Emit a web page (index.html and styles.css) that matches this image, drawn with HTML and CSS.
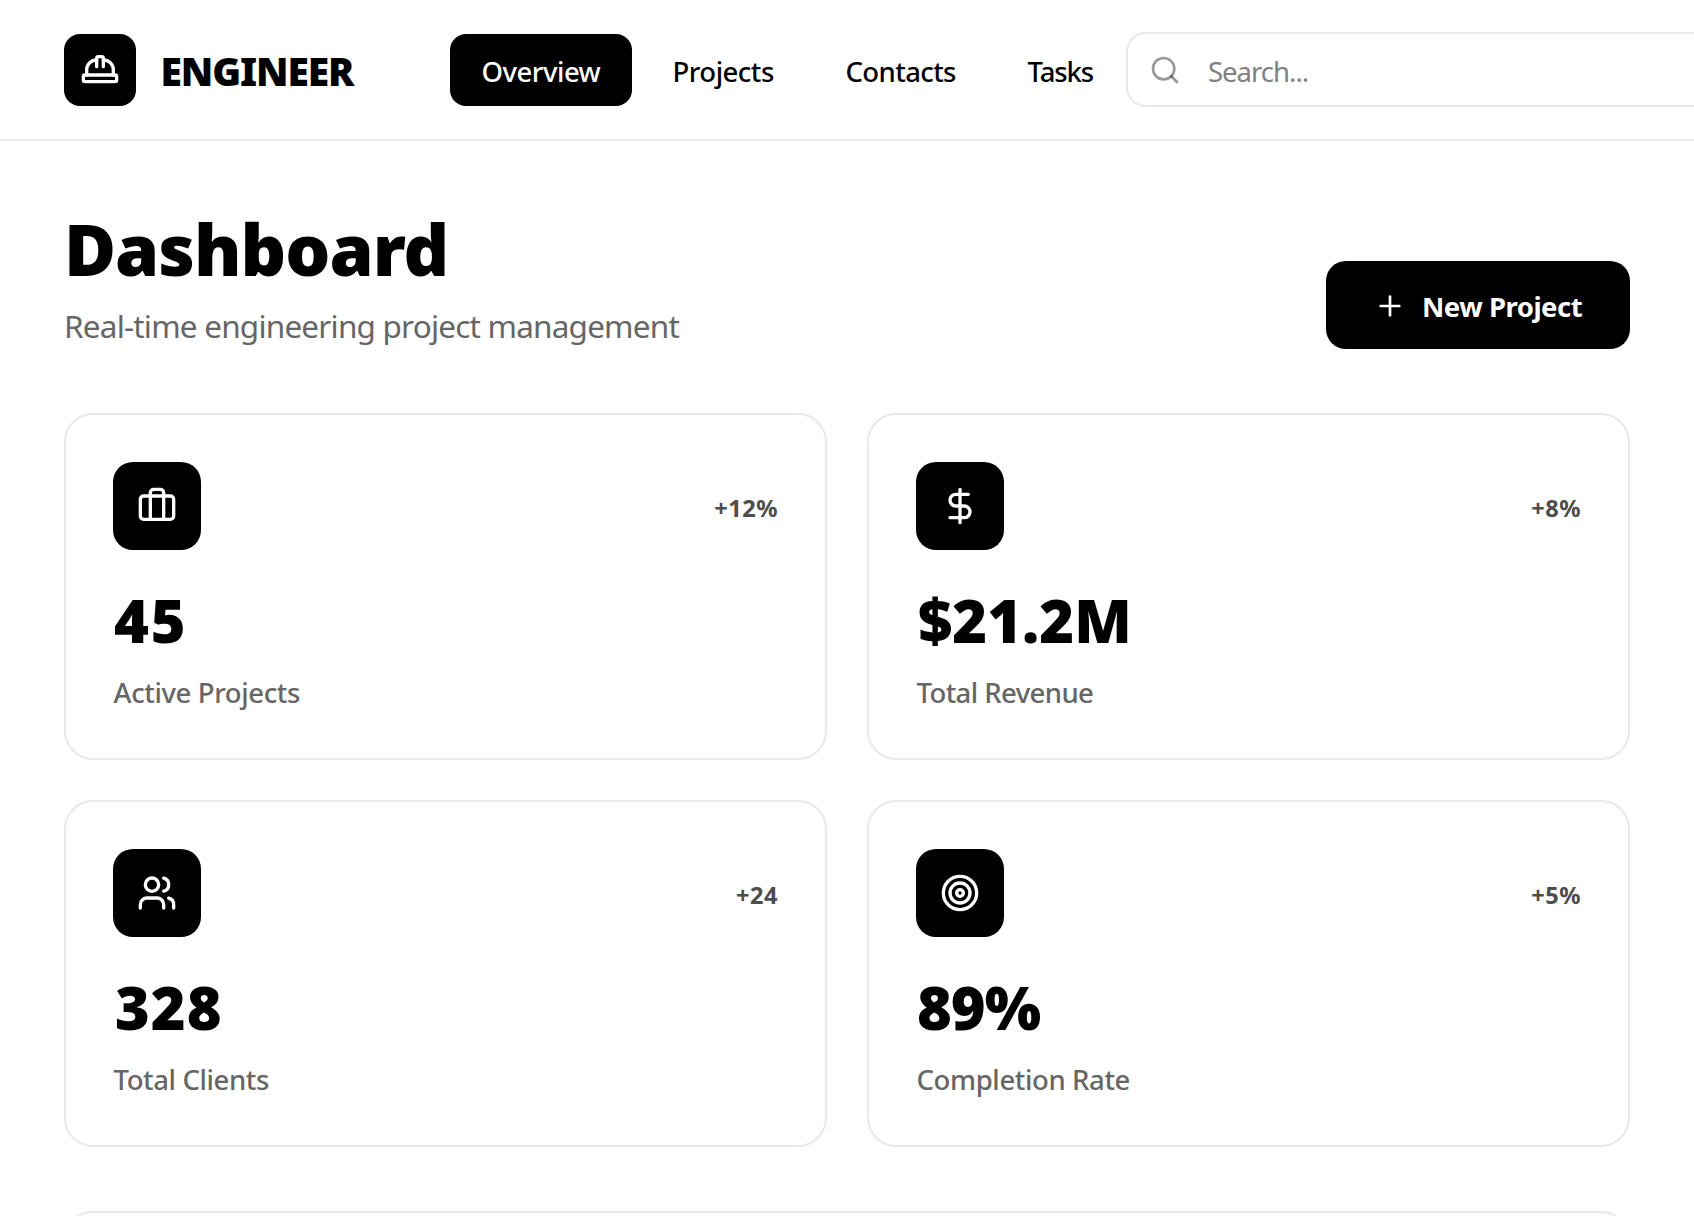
FILE: index.html
```html
<!DOCTYPE html>
<html lang="en">
<head>
<meta charset="utf-8">
<title>Engineer – Dashboard</title>
<link rel="stylesheet" href="styles.css">
</head>
<body>
<header class="topbar">
  <div class="brand">
    <span class="brand-mark">
      <svg class="icon icon-lg" viewBox="0 0 24 24"><path d="M2 18a1 1 0 0 0 1 1h18a1 1 0 0 0 1-1v-2a1 1 0 0 0-1-1H3a1 1 0 0 0-1 1z"/><path d="M10 10V5a1 1 0 0 1 1-1h2a1 1 0 0 1 1 1v5"/><path d="M4 15v-3a6 6 0 0 1 6-6"/><path d="M14 6a6 6 0 0 1 6 6v3"/></svg>
    </span>
    <span class="brand-name">ENGINEER</span>
  </div>
  <nav class="nav">
    <a class="nav-item nav-overview active">Overview</a>
    <a class="nav-item nav-projects">Projects</a>
    <a class="nav-item nav-contacts">Contacts</a>
    <a class="nav-item nav-tasks">Tasks</a>
  </nav>
  <div class="search">
    <svg class="icon icon-md" viewBox="0 0 24 24"><circle cx="11" cy="11" r="8"/><path d="m21 21-4.3-4.3"/></svg>
    <span class="search-text">Search...</span>
  </div>
</header>
<main class="main">
  <section class="page-head">
    <div>
      <h1 class="title">Dashboard</h1>
      <p class="subtitle">Real-time engineering project management</p>
    </div>
    <button class="new-btn">
      <svg class="icon icon-md" viewBox="0 0 24 24"><path d="M5 12h14"/><path d="M12 5v14"/></svg>
      <span class="new-label">New Project</span>
    </button>
  </section>
  <section class="stats">
    <article class="card">
      <div class="card-top">
        <span class="tile"><svg class="icon icon-lg" viewBox="0 0 24 24"><path d="M16 20V4a2 2 0 0 0-2-2h-4a2 2 0 0 0-2 2v16"/><rect width="20" height="14" x="2" y="6" rx="2"/></svg></span>
        <span class="delta">+12%</span>
      </div>
      <div class="value wide">45</div>
      <div class="label">Active Projects</div>
    </article>
    <article class="card">
      <div class="card-top">
        <span class="tile"><svg class="icon icon-lg" viewBox="0 0 24 24"><path d="M12 2v20"/><path d="M17 5H9.500a3.500 3.500 0 0 0 0 7h5a3.500 3.500 0 0 1 0 7H6"/></svg></span>
        <span class="delta">+8%</span>
      </div>
      <div class="value money">$21.2M</div>
      <div class="label tight">Total Revenue</div>
    </article>
    <article class="card">
      <div class="card-top">
        <span class="tile"><svg class="icon icon-lg" viewBox="0 0 24 24"><path d="M16 21v-2a4 4 0 0 0-4-4H6a4 4 0 0 0-4 4v2"/><circle cx="9" cy="7" r="4"/><path d="M22 21v-2a4 4 0 0 0-3-3.870"/><path d="M16 3.130a4 4 0 0 1 0 7.750"/></svg></span>
        <span class="delta">+24</span>
      </div>
      <div class="value roomy">328</div>
      <div class="label">Total Clients</div>
    </article>
    <article class="card">
      <div class="card-top">
        <span class="tile"><svg class="icon icon-lg" viewBox="0 0 24 24"><circle cx="12" cy="12" r="10"/><circle cx="12" cy="12" r="6"/><circle cx="12" cy="12" r="2"/></svg></span>
        <span class="delta">+5%</span>
      </div>
      <div class="value narrow">89%</div>
      <div class="label">Completion Rate</div>
    </article>
  </section>
  <section class="panel"></section>
</main>
</body>
</html>
```
FILE: styles.css
```css
* { box-sizing: border-box; }
html, body { height: 100%; }
body {
  display: flex;
  flex-direction: column;
  margin: 0;
  overflow: hidden;
  background: #fff;
  color: #000;
  font-family: "Noto Sans", "Open Sans", sans-serif;
}
.icon { display: block; flex: none; fill: none; stroke: currentColor; stroke-width: 2; stroke-linecap: round; stroke-linejoin: round; }
.icon-lg { width: 40px; height: 40px; }
.icon-md { width: 32px; height: 32px; }

.topbar {
  display: flex;
  flex: none;
  align-items: center;
  height: 141px;
  padding-left: 64px;
  border-bottom: 2px solid #ebebeb;
}
.brand { display: flex; align-items: center; gap: 24px; width: 385.500px; flex: none; }
.brand-mark {
  display: flex; align-items: center; justify-content: center;
  width: 72px; height: 72px; border-radius: 16px; background: #000; color: #fff;
}
.brand-name { font-size: 39px; font-weight: 900; line-height: 56px; letter-spacing: -1.100px; padding: 3px 0 0 .5px; }
.nav { display: flex; gap: 8px; flex: none; }
.nav-item {
  flex: none; height: 72px; padding: 4px 0 0 32px; border-radius: 16px;
  font-size: 27.500px; font-weight: 500; line-height: 68px; letter-spacing: -.5px; white-space: nowrap;
}
.nav-item.active { background: #000; color: #fff; }
.nav-overview { width: 182.500px; }
.nav-projects { width: 165.500px; padding-left: 32.500px; }
.nav-contacts { width: 174px; letter-spacing: -.6px; }
.nav-tasks { width: 130.500px; letter-spacing: -1.100px; }
.search {
  display: flex; align-items: center; gap: 27px; flex: none;
  width: 640px; height: 75px; padding-left: 21px;
  border: 2px solid #e9e9e9; border-radius: 20px;
}
.search .icon { color: rgba(0, 0, 0, .4); }
.search-text { font-size: 27.500px; line-height: 40px; letter-spacing: -1px; color: #808080; padding-top: 5px; }

.main { flex: 1; min-height: 0; overflow: hidden; padding: 71px 64px 0; }
.page-head { display: flex; justify-content: space-between; align-items: flex-end; height: 137px; }
.title { margin: 0; font-size: 71px; font-weight: 900; line-height: 72px; letter-spacing: -1px; }
.subtitle { margin: 17px 0 -1px; font-size: 31.500px; line-height: 48px; letter-spacing: -.8px; color: #666; }
.new-btn {
  display: flex; align-items: center; gap: 16px;
  width: 304px; height: 88px; padding: 1px 0 0 48px;
  border: 0; border-radius: 20px; background: #000; color: #fff; font-family: inherit;
}
.new-label { font-size: 27.500px; font-weight: 700; line-height: 40px; letter-spacing: -.5px; padding-top: 2px; white-space: nowrap; }

.stats { display: grid; grid-template-columns: 1fr 1fr; gap: 40px; margin-top: 64px; }
.card { height: 347px; padding: 47px; border: 2px solid #e9e9e9; border-radius: 29px; }
.card-top { display: flex; align-items: center; justify-content: space-between; }
.tile {
  display: flex; align-items: center; justify-content: center;
  width: 88px; height: 88px; border-radius: 20px; background: #000; color: #fff;
}
.delta { padding-top: 3px; font-size: 23.600px; font-weight: 700; line-height: 36px; letter-spacing: .5px; color: #4d4d4d; }
.value { margin: 39px 0 0 1px; font-size: 59.500px; font-weight: 900; line-height: 62px; }
.value.wide { letter-spacing: 2px; }
.value.money { margin-left: 2px; }
.value.roomy { margin-left: 2px; letter-spacing: 1px; }
.value.narrow { letter-spacing: -1px; }
.label { margin: 21.500px 0 0 .5px; font-size: 27.500px; font-weight: 500; line-height: 40px; letter-spacing: -.38px; color: #666; }
.label.tight { letter-spacing: -.58px; }
.panel { height: 300px; margin-top: 64px; border: 2px solid #e9e9e9; border-radius: 29px; }
```
